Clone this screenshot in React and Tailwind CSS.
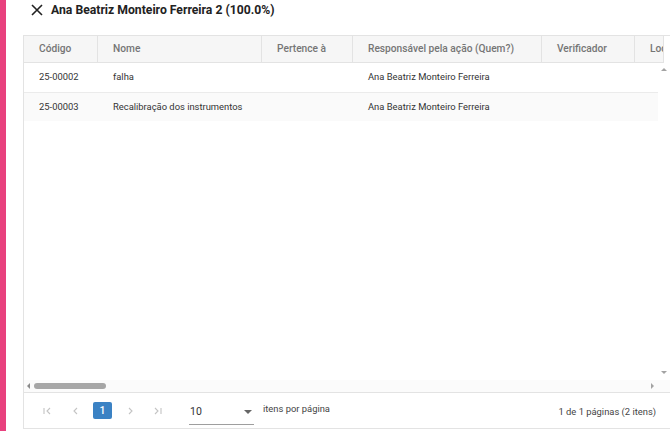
const cols = [
  { label: "Código", w: "w-[74px]" },
  { label: "Nome", w: "w-[164px]" },
  { label: "Pertence à", w: "w-[91px]" },
  { label: "Responsável pela ação (Quem?)", w: "w-[189px]" },
  { label: "Verificador", w: "w-[93px]" },
  { label: "Local", w: "w-[80px]" },
];

const rows = [
  ["25-00002", "falha", "", "Ana Beatriz Monteiro Ferreira", "", ""],
  ["25-00003", "Recalibração dos instrumentos", "", "Ana Beatriz Monteiro Ferreira", "", ""],
];

const PagerIcon = ({ d }) => (
  <svg width="10" height="10" viewBox="0 0 10 10" fill="none" stroke="#c4c4c4" strokeWidth="1.1">
    <path d={d} />
  </svg>
);

export default function App() {
  return (
    <div className="flex w-[670px] h-[431px] bg-white overflow-hidden" style={{ fontFamily: "Roboto, 'Liberation Sans', sans-serif" }}>
      <div className="w-[6px] shrink-0 bg-[#e8417e]" />
      <div className="flex-1 flex flex-col min-w-0">
        <div className="h-[35px] shrink-0 flex items-start pt-[2px] pl-[25px]">
          <svg width="12" height="12" viewBox="0 0 12 12" className="mt-[2px]" stroke="#222" strokeWidth="1.6">
            <path d="M1 1 L11 11 M11 1 L1 11" />
          </svg>
          <span className="ml-[8px] text-[12.2px] font-bold text-[#222] leading-[16px]">
            Ana Beatriz Monteiro Ferreira 2 (100.0%)
          </span>
        </div>

        <div className="ml-[17px] h-[394px] border border-[#e3e3e3] border-r-0 flex flex-col overflow-hidden">
          {/* header */}
          <div className="w-[640px] flex h-[27px] shrink-0 bg-[#f6f6f6] border-b border-r border-[#e3e3e3] overflow-hidden">
            {cols.map((c, i) => (
              <div
                key={i}
                className={`${c.w} shrink-0 px-[15px] flex items-center text-[10.2px] font-medium text-[#757575] border-r border-[#e3e3e3] whitespace-nowrap overflow-hidden`}
              >
                {c.label}
              </div>
            ))}
          </div>

          {/* body + vertical scrollbar */}
          <div className="flex flex-1 min-h-0">
            <div className="flex-1 min-w-0 flex flex-col overflow-hidden">
              {rows.map((r, ri) => (
                <div
                  key={ri}
                  className={`flex shrink-0 ${ri === 0 ? "h-[30px] border-b border-[#ebebeb]" : "h-[28px] bg-[#fafafa]"}`}
                >
                  {cols.map((c, i) => (
                    <div
                      key={i}
                      className={`${c.w} shrink-0 px-[15px] flex items-center text-[9.4px] text-[#333] whitespace-nowrap overflow-hidden`}
                    >
                      {r[i]}
                    </div>
                  ))}
                </div>
              ))}
            </div>
            <div className="w-[12px] shrink-0 flex flex-col items-center justify-between pt-[5px] pb-[6px]">
              <div className="w-0 h-0 border-l-[3px] border-r-[3px] border-b-[3px] border-l-transparent border-r-transparent border-b-[#a3a3a3]" />
              <div className="w-0 h-0 border-l-[3px] border-r-[3px] border-t-[3px] border-l-transparent border-r-transparent border-t-[#a3a3a3]" />
            </div>
          </div>

          {/* horizontal scrollbar */}
          <div className="h-[12px] shrink-0 flex items-center bg-[#fbfbfb]">
            <div className="ml-[3px] w-0 h-0 border-t-[3px] border-b-[3px] border-r-[3px] border-t-transparent border-b-transparent border-r-[#8a8a8a]" />
            <div className="ml-[4px] w-[72px] h-[6px] rounded-full bg-[#a6a6a6]" />
            <div className="flex-1" />
            <div className="mr-[16px] w-0 h-0 border-t-[3px] border-b-[3px] border-l-[3px] border-t-transparent border-b-transparent border-l-[#a3a3a3]" />
          </div>

          {/* footer */}
          <div className="h-[36px] shrink-0 border-t border-[#e3e3e3] flex items-center pl-[17px] pr-[14px]">
            <div className="flex items-center">
              <div className="w-[12px] flex justify-center"><PagerIcon d="M2 2 V8 M8 2 L5 5 L8 8" /></div>
              <div className="w-[12px] ml-[17px] flex justify-center"><PagerIcon d="M6 2 L3 5 L6 8" /></div>
              <div className="ml-[11px] w-[19px] h-[17px] bg-[#3b82c4] rounded-[2px] text-white text-[10.5px] font-medium flex items-center justify-center">1</div>
              <div className="w-[12px] ml-[12px] flex justify-center"><PagerIcon d="M4 2 L7 5 L4 8" /></div>
              <div className="w-[12px] ml-[16px] flex justify-center"><PagerIcon d="M2 2 L5 5 L2 8 M8 2 V8" /></div>
            </div>
            <div className="ml-[25px] w-[65px] h-[24px] mt-[4px] border-b border-[#9e9e9e] flex items-center justify-between pl-[1px] pr-[2px]">
              <span className="text-[10.5px] text-[#333]">10</span>
              <div className="w-0 h-0 border-l-[4px] border-r-[4px] border-t-[4px] border-l-transparent border-r-transparent border-t-[#666]" />
            </div>
            <span className="ml-[9px] text-[9.4px] text-[#444] self-start mt-[9px]">itens por página</span>
            <div className="flex-1" />
            <span className="text-[9.4px] text-[#444] mt-[3px]">1 de 1 páginas (2 itens)</span>
          </div>
        </div>
      </div>
    </div>
  );
}
